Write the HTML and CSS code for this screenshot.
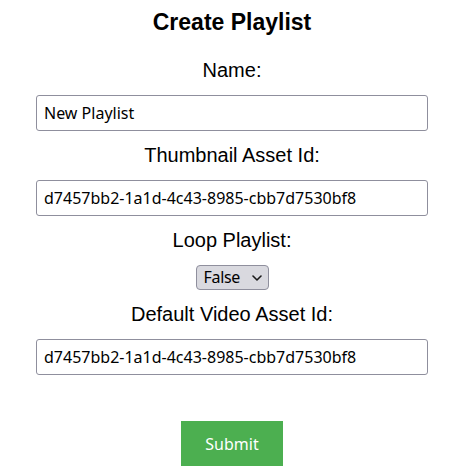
FILE: index.html
```html
<!DOCTYPE html>
<html lang="en">
<head>
<meta charset="utf-8">
<title>Create Playlist</title>
<link rel="stylesheet" href="styles.css">
</head>
<body>
<form class="playlist-form">
  <h1 class="title">Create Playlist</h1>
  <label class="label label-first" for="name">Name:</label>
  <input class="field" id="name" type="text" value="New Playlist">
  <label class="label" for="thumb">Thumbnail Asset Id:</label>
  <input class="field" id="thumb" type="text" value="d7457bb2-1a1d-4c43-8985-cbb7d7530bf8">
  <label class="label" for="loop">Loop Playlist:</label>
  <div class="select-wrap">
    <select class="select" id="loop">
      <option>False</option>
      <option>True</option>
    </select>
    <svg class="chevron" width="10" height="6" viewBox="0 0 10 6" aria-hidden="true">
      <path d="M1 1 L5 5 L9 1" fill="none" stroke="#1a1a1a" stroke-width="1.6" stroke-linecap="round" stroke-linejoin="round"/>
    </svg>
  </div>
  <label class="label" for="video">Default Video Asset Id:</label>
  <input class="field" id="video" type="text" value="d7457bb2-1a1d-4c43-8985-cbb7d7530bf8">
  <button class="submit" type="submit">Submit</button>
</form>
</body>
</html>
```
FILE: styles.css
```css
body {
  margin: 8px 3px 8px 8px;
  background: #ffffff;
  color: #000000;
  font-family: "Liberation Sans", Arial, sans-serif;
}

.playlist-form {
  display: flex;
  flex-direction: column;
  align-items: center;
}

.title {
  margin: 1px 0 0;
  font-size: 23px;
  line-height: 26px;
  font-weight: bold;
}

.label {
  display: block;
  margin-top: 13px;
  margin-bottom: 13px;
  font-size: 20px;
  line-height: 23px;
}

.label-first {
  margin-top: 24px;
}

.field {
  box-sizing: border-box;
  width: 392px;
  height: 36px;
  margin: 0;
  padding: 0 7px;
  border: 1px solid #8f8f9d;
  border-radius: 3px;
  background: #ffffff;
  color: #000000;
  font-family: "Noto Sans", "Open Sans", sans-serif;
  font-size: 16px;
}

.select-wrap {
  position: relative;
  display: inline-flex;
}

.select {
  box-sizing: border-box;
  width: 73px;
  height: 25px;
  margin: 0;
  padding: 0 0 0 7px;
  border: 1px solid #8f8f9d;
  border-radius: 4px;
  background: #d9d9df;
  color: #000000;
  font-family: "Noto Sans", "Open Sans", sans-serif;
  font-size: 16px;
  letter-spacing: -0.3px;
  line-height: 23px;
  -webkit-appearance: none;
  appearance: none;
}

.chevron {
  position: absolute;
  right: 7px;
  top: 10px;
  pointer-events: none;
}

.submit {
  box-sizing: border-box;
  width: 102px;
  height: 45px;
  margin-top: 46px;
  border: none;
  border-radius: 0;
  background: #4caf50;
  color: #ffffff;
  font-family: "Noto Sans", "Open Sans", sans-serif;
  font-size: 16px;
  cursor: pointer;
}
```
